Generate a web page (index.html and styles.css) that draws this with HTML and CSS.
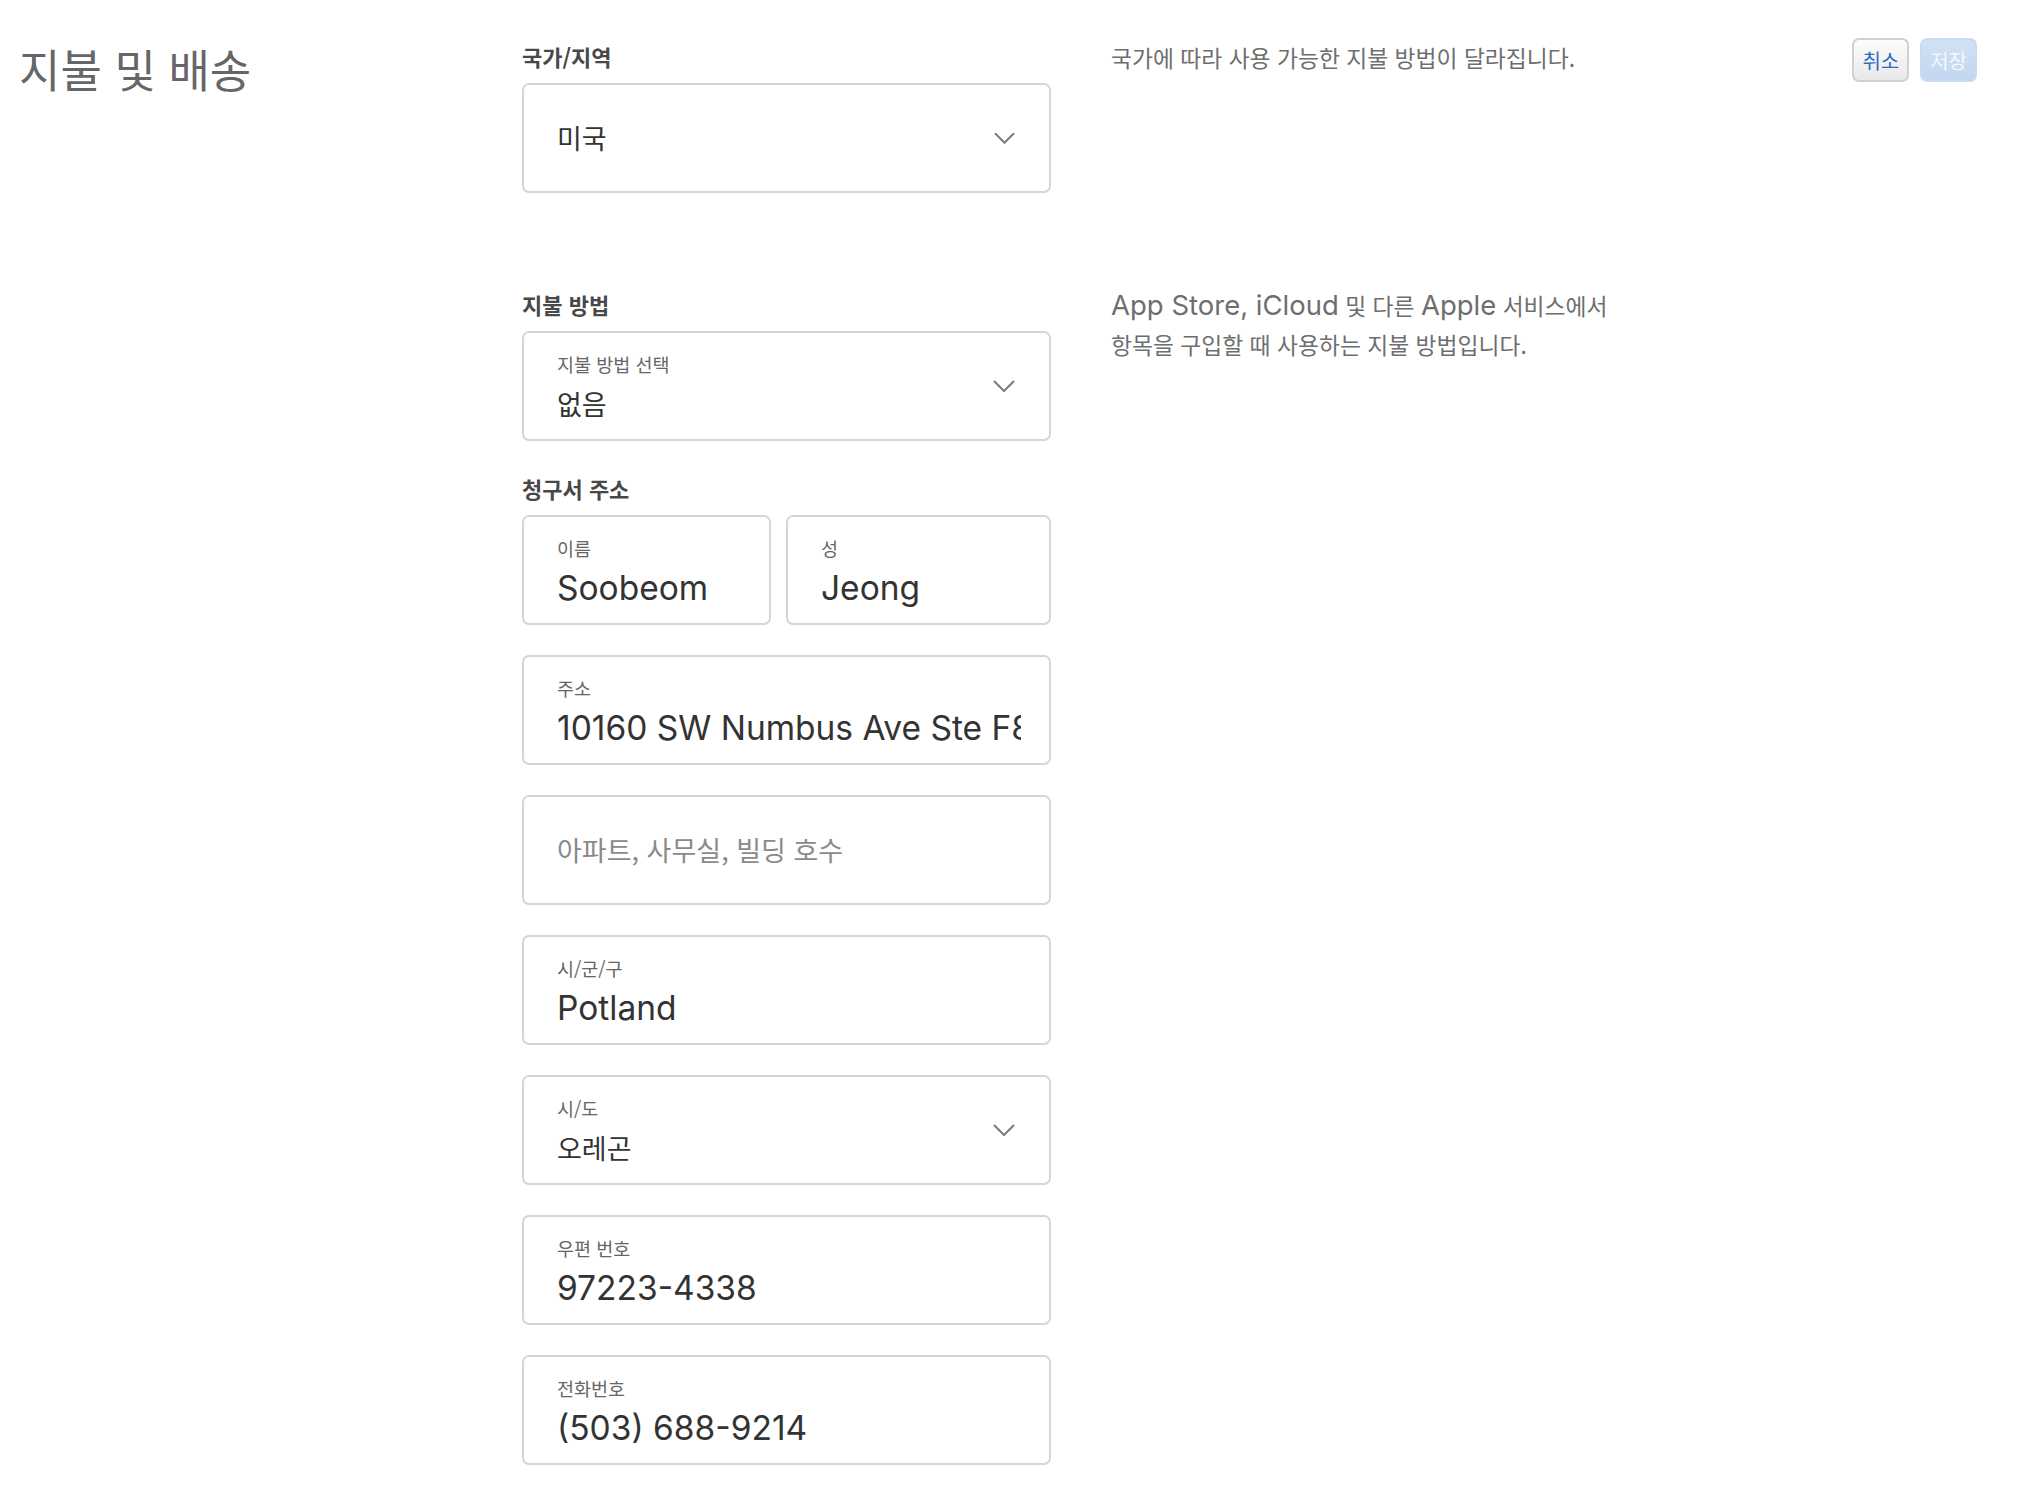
FILE: index.html
```html
<!DOCTYPE html>
<html lang="ko">
<head>
    <meta charset="UTF-8">
    <meta name="viewport" content="width=device-width, initial-scale=1.0">
    <title>지불 및 배송</title>
    <link rel="stylesheet" href="styles.css">
</head>
<body>
    <div class="page">
        <h1 class="title">지불 및 배송</h1>

        <section class="section">
            <div class="group-label">국가/지역</div>
            <div class="field select single">
                <span class="value ko">미국</span>
                <svg class="chevron" width="22" height="12" viewBox="0 0 22 12"><path d="M1 1l10 10L21 1" fill="none" stroke="#7a7a7a" stroke-width="2"/></svg>
            </div>
        </section>
        <p class="note">국가에 따라 사용 가능한 지불 방법이 달라집니다.</p>
        <div class="actions">
            <button type="button" class="btn">취소</button>
            <button type="button" class="btn primary" disabled>저장</button>
        </div>

        <section class="section payment">
            <div class="group-label">지불 방법</div>
            <div class="field select">
                <div class="field-body">
                    <div class="field-label">지불 방법 선택</div>
                    <div class="value ko">없음</div>
                </div>
                <svg class="chevron" width="22" height="12" viewBox="0 0 22 12"><path d="M1 1l10 10L21 1" fill="none" stroke="#7a7a7a" stroke-width="2"/></svg>
            </div>

            <div class="group-label billing">청구서 주소</div>
            <div class="name-row">
                <div class="field">
                    <div class="field-label">이름</div>
                    <input class="value" type="text" value="Soobeom">
                </div>
                <div class="field">
                    <div class="field-label">성</div>
                    <input class="value" type="text" value="Jeong">
                </div>
            </div>
            <div class="field">
                <div class="field-label">주소</div>
                <input class="value" type="text" value="10160 SW Numbus Ave Ste F8">
            </div>
            <div class="field single">
                <input class="value ko" type="text" placeholder="아파트, 사무실, 빌딩 호수">
            </div>
            <div class="field">
                <div class="field-label">시/군/구</div>
                <input class="value" type="text" value="Potland">
            </div>
            <div class="field select">
                <div class="field-body">
                    <div class="field-label">시/도</div>
                    <div class="value ko">오레곤</div>
                </div>
                <svg class="chevron" width="22" height="12" viewBox="0 0 22 12"><path d="M1 1l10 10L21 1" fill="none" stroke="#7a7a7a" stroke-width="2"/></svg>
            </div>
            <div class="field">
                <div class="field-label">우편 번호</div>
                <input class="value" type="text" value="97223-4338">
            </div>
            <div class="field">
                <div class="field-label">전화번호</div>
                <input class="value" type="text" value="(503) 688-9214">
            </div>
        </section>
        <p class="note"><span class="en">App Store, iCloud</span> 및 다른 <span class="en">Apple</span> 서비스에서<br>항목을 구입할 때 사용하는 지불 방법입니다.</p>
    </div>
</body>
</html>
```

FILE: styles.css
```css
body {
    margin: 0;
    background: #fff;
    font-family: Inter, "Noto Sans CJK KR", sans-serif;
    color: #333;
}
.page {
    display: grid;
    grid-template-columns: 503px 529px 1fr auto;
    align-items: start;
    padding: 42px 53px 40px 19px;
}
.title {
    grid-row: 1;
    grid-column: 1;
    margin: 0;
    font-family: "Noto Sans CJK KR", sans-serif;
    font-size: 45px;
    font-weight: 400;
    line-height: 54px;
    color: #666;
}
.section {
    grid-column: 2;
}
.payment {
    grid-row: 2;
    margin-top: 67px;
}
.note {
    grid-column: 3;
    margin: -4px 0 0 60px;
    font-family: "Noto Sans CJK KR", sans-serif;
    font-size: 22.8px;
    line-height: 39px;
    color: #6e6e6e;
}
.note .en {
    font-family: Inter, sans-serif;
    font-size: 27.5px;
}
.payment + .note {
    grid-row: 2;
    margin-top: 63px;
}
.actions {
    grid-row: 1;
    grid-column: 4;
    display: flex;
    gap: 11px;
    margin-top: -4px;
}
.btn {
    height: 44px;
    padding: 0 8px;
    border: 2px solid #d0d0d0;
    border-radius: 7px;
    background: linear-gradient(#fdfdfd, #e8e8e8);
    font-family: "Noto Sans CJK KR", sans-serif;
    font-size: 20px;
    color: #2c6bc3;
}
.btn.primary {
    border-color: #c9dbf1;
    background: linear-gradient(#d2e2f5, #c3d6ee);
    color: #f4f8fd;
}
.group-label {
    font-family: "Noto Sans CJK KR", sans-serif;
    font-size: 22px;
    font-weight: 700;
    line-height: 28px;
    color: #484848;
    margin-bottom: 13px;
}
.group-label.billing {
    margin-top: 33px;
}
.name-row {
    display: grid;
    grid-template-columns: 249px 1fr;
    gap: 15px;
}
.field {
    box-sizing: border-box;
    height: 110px;
    margin-bottom: 30px;
    padding: 20px 28px 0 33px;
    border: 2px solid #d6d6d6;
    border-radius: 7px;
    background: #fff;
    overflow: hidden;
}
.field.single {
    display: flex;
    align-items: center;
    padding-top: 0;
}
.field.select {
    display: flex;
    align-items: center;
    justify-content: space-between;
    padding-right: 34px;
}
.field.select:not(.single) {
    padding-top: 20px;
    align-items: flex-start;
}
.field.select:not(.single) .chevron {
    align-self: center;
    margin-top: -21px;
}
.field-label {
    font-family: "Noto Sans CJK KR", sans-serif;
    font-size: 18.5px;
    line-height: 22px;
    color: #666;
    margin-bottom: 9px;
}
.value {
    display: block;
    width: 100%;
    margin: 0;
    padding: 0;
    border: none;
    outline: none;
    background: transparent;
    font-family: Inter, "Noto Sans CJK KR", sans-serif;
    font-size: 33.5px;
    line-height: 40px;
    height: 40px;
    color: #333;
}
.value.ko {
    font-family: "Noto Sans CJK KR", sans-serif;
    font-size: 27px;
}
.value::placeholder {
    color: #8a8a8a;
}
```
